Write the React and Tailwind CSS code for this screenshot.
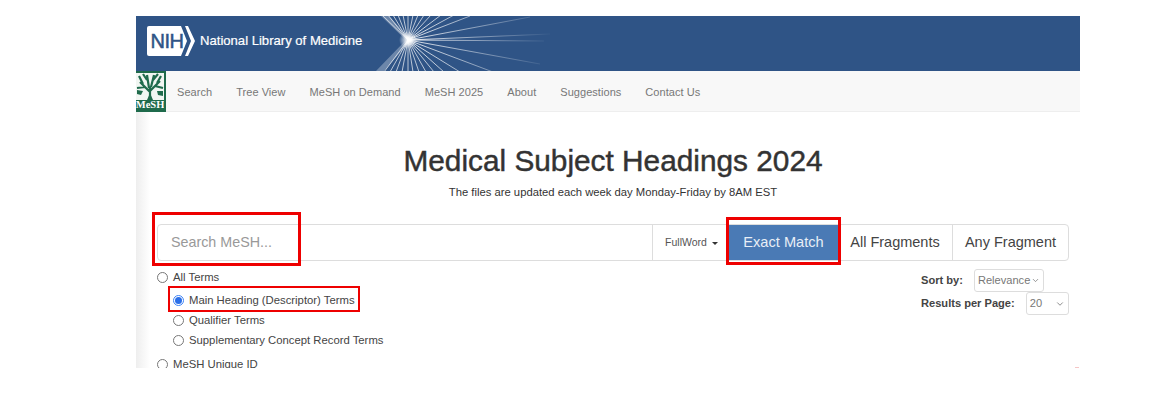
import { ChevronDown } from "lucide-react";

const NAV_ITEMS = ["Search", "Tree View", "MeSH on Demand", "MeSH 2025", "About", "Suggestions", "Contact Us"];

// Rays of the NLM starburst, as end points from the centre at (0,0)
const RAYS = [
  [-26, -25], [-20, -25], [-15, -25], [-10, -25], [-5, -25], [0, -25], [5, -25], [10, -25], [16, -25], [23, -25], [33, -25], [46, -25],
  [62, -24], [122, -23], [142, -6], [136, 1], [132, 24], [85, 32], [52, 32], [36, 32], [26, 32], [18, 32],
  [11, 32], [5, 32], [0, 32], [-6, 32], [-12, 32], [-18, 32], [-24, 32],
];

function Starburst() {
  return (
    <svg width="200" height="55" viewBox="-40 -24 200 55" className="absolute left-[232px] top-0">
      <defs>
        <linearGradient id="ray" gradientUnits="userSpaceOnUse" x1="0" y1="0" x2="140" y2="0">
          <stop offset="0" stopColor="#ffffff" stopOpacity="0.95" />
          <stop offset="1" stopColor="#ffffff" stopOpacity="0.04" />
        </linearGradient>
        <radialGradient id="glow">
          <stop offset="0" stopColor="#ffffff" />
          <stop offset="0.4" stopColor="#ffffff" stopOpacity="0.65" />
          <stop offset="1" stopColor="#ffffff" stopOpacity="0" />
        </radialGradient>
      </defs>
      <path d="M-27 -24 L-2 0 L-32 31 L-24 31 L3 0 L-19 -24 Z" fill="#ffffff" opacity="0.3" />
      {RAYS.map(([x, y], i) => (
        <line
          key={i}
          x1="0"
          y1="0"
          x2={x}
          y2={y}
          stroke={x > 30 ? "url(#ray)" : "#ffffff"}
          strokeOpacity={x > 30 ? 1 : 0.75}
          strokeWidth="0.9"
        />
      ))}
      <circle cx="0" cy="0" r="9" fill="url(#glow)" />
    </svg>
  );
}

function NihLogo() {
  return (
    <div className="flex items-center">
      <div className="relative flex h-[30px] w-[48px] items-center justify-center">
        <svg width="48" height="30" viewBox="0 0 48 30" className="absolute inset-0">
          <path d="M2 0 H34 L40 15 L34 30 H2 Q0 30 0 28 V2 Q0 0 2 0 Z" fill="#ffffff" />
          <path d="M38 0 H41 L48 15 L41 30 H38 L44 15 Z" fill="#ffffff" />
        </svg>
        <span className="relative -ml-[8px] text-[20px] tracking-[-0.5px] text-[#2f5486] [-webkit-text-stroke:0.5px_#2f5486]">NIH</span>
      </div>
      <span className="ml-[5px] text-[13.1px] text-white [-webkit-text-stroke:0.2px_white]">National Library of Medicine</span>
    </div>
  );
}

function MeshLogo() {
  return (
    <div className="flex h-[41px] w-[30px] shrink-0 flex-col items-center overflow-hidden border-r-2 border-[#1f6b4c] bg-white">
      <svg width="28" height="29" viewBox="0 0 28 29" className="shrink-0">
        <rect width="28" height="29" fill="#f1f6f2" />
        <path d="M0 1 H28" stroke="#1f6b4c" strokeWidth="2" />
        <path d="M14 29 V16 M14 21 L4 11 M14 20 L24 10 M13 17 L11 4 M15 16 L18 4 M9 16 L1 17 M19 15 L27 17 M7 13 L3 5 M21 12 L25 5 M11 9 L7 3 M17 9 L22 3" stroke="#1f6b4c" strokeWidth="2.2" fill="none" />
        <path d="M1 19 L7 20 L5 24 L1 23 Z M21 20 L27 20 L27 25 L22 24 Z M11 29 L14 22 L17 29 Z" fill="#1f6b4c" />
      </svg>
      <div className="flex h-[12px] w-full items-center justify-center bg-[#1f6b4c] font-['Liberation_Serif'] text-[10.5px] font-bold leading-none text-white">
        MeSH
      </div>
    </div>
  );
}

function Radio({ label, checked, className = "" }) {
  return (
    <div className={`flex h-[20px] items-center gap-[5px] text-[11.3px] text-[#444444] ${className}`}>
      {checked ? (
        <span className="flex h-[11px] w-[11px] items-center justify-center rounded-full border border-[#3b82f6]">
          <span className="h-[7px] w-[7px] rounded-full bg-[#2b6fe8]" />
        </span>
      ) : (
        <span className="h-[11px] w-[11px] rounded-full border border-[#777777] bg-white" />
      )}
      <span>{label}</span>
    </div>
  );
}

export default function App() {
  return (
    <div className="h-[420px] w-[1176px] overflow-hidden bg-white pt-4 font-['Liberation_Sans',sans-serif]">
      <div className="relative ml-[136px] h-[352px] w-[944px] overflow-hidden bg-white">
        <div className="relative flex h-[55px] items-center bg-[#2f5486] pb-[6px] pl-[11px]">
          <NihLogo />
          <Starburst />
        </div>

        <div className="flex h-[41px] items-center border-b border-[#eeeeee] bg-[#f8f8f8]">
          <MeshLogo />
          <nav className="ml-[11px] mt-[2px] flex gap-[24px] text-[11px] tracking-[0.05px] text-[#777777]">
            {NAV_ITEMS.map((item) => (
              <span key={item}>{item}</span>
            ))}
          </nav>
        </div>

        {/* soft shadow along the left edge of the page body */}
        <div className="absolute bottom-0 left-0 top-[96px] w-[14px] bg-gradient-to-r from-[#eeeeee] to-white" />

        <main className="relative pl-[21px] pr-[11px]">
          <h1 className="mt-[31px] text-center text-[29.8px] leading-[36px] text-[#333333] [-webkit-text-stroke:0.45px_#333333]">
            Medical Subject Headings 2024
          </h1>
          <p className="mt-[5px] text-center text-[11.25px] leading-[16px] text-[#333333]">
            The files are updated each week day Monday-Friday by 8AM EST
          </p>

          <div className="mt-[24px] flex h-[37px] rounded-[4px] border border-[#dddddd]">
            <div className="flex flex-1 items-center pl-[13px] text-[14.3px] text-[#999999]">Search MeSH...</div>
            <div className="flex w-[77px] items-center justify-center gap-[5px] border-l border-[#dddddd] pl-[1px] text-[10.5px] text-[#555555]">
              FullWord
              <span className="mt-[1px] h-0 w-0 border-x-[3.5px] border-t-[3.5px] border-x-transparent border-t-[#333333]" />
            </div>
            <div className="flex w-[109px] items-center justify-center bg-[#4a7ab5] text-[14.6px] text-[#e8eef6]">
              Exact Match
            </div>
            <div className="flex w-[114px] items-center justify-center text-[14.5px] text-[#444444]">All Fragments</div>
            <div className="flex w-[116px] items-center justify-center border-l border-[#dddddd] text-[14.5px] text-[#444444]">
              Any Fragment
            </div>
          </div>

          <div className="flex justify-between">
            <div className="mt-[6px]">
              <Radio label="All Terms" />
              <div className="ml-[16px] mt-[3px]">
                <Radio label="Main Heading (Descriptor) Terms" checked />
                <Radio label="Qualifier Terms" />
                <Radio label="Supplementary Concept Record Terms" />
              </div>
              <Radio label="MeSH Unique ID" className="mt-[4px]" />
            </div>

            <div className="mt-[8px] w-[148px] text-[11.1px] font-bold text-[#444444]">
              <div className="flex h-[23px] items-center gap-[11px]">
                <span>Sort by:</span>
                <div className="flex h-[23px] w-[70px] items-center justify-between rounded-[3px] border border-[#dddddd] px-[3px] font-normal text-[#777777]">
                  Relevance
                  <ChevronDown size={9} />
                </div>
              </div>
              <div className="flex h-[23px] items-center gap-[11px]">
                <span className="whitespace-nowrap">Results per Page:</span>
                <div className="flex h-[23px] w-[43px] shrink-0 items-center justify-between rounded-[3px] border border-[#dddddd] px-[3px] font-normal text-[#777777]">
                  20
                  <ChevronDown size={10} />
                </div>
              </div>
            </div>
          </div>
        </main>

        {/* red annotation boxes drawn over the screenshot */}
        <div className="absolute left-[16px] top-[196px] h-[54px] w-[149px] border-[3px] border-[#ee0000]" />
        <div className="absolute left-[590px] top-[201px] h-[48px] w-[115px] border-[3px] border-[#ee0000]" />
        <div className="absolute left-[32px] top-[270px] h-[26px] w-[192px] border-[2px] border-[#ee0000]" />
        <div className="absolute left-[939px] top-[351px] h-px w-[4px] bg-[#f5c6c6]" />
      </div>
    </div>
  );
}
